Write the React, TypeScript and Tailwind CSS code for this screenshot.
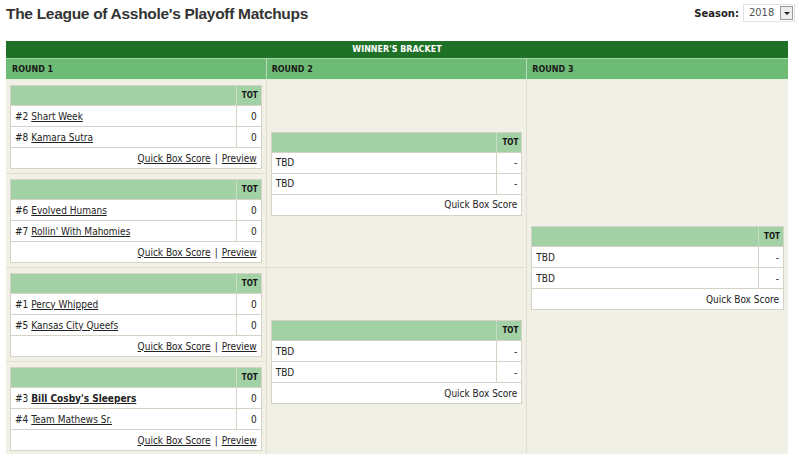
import React from "react";

type Team = { seed?: string; name: string; score: string; bold?: boolean; link?: boolean };

function Card({ teams, preview }: { teams: Team[]; preview: boolean }) {
  return (
    <div className="w-full border border-[#d6d3c6] bg-white">
      <div className="flex h-[20px] bg-[#a3d1a6] border-b border-[#d6d3c6]">
        <div className="flex-1" />
        <div className="w-[25px] border-l border-[#c5dfc6] flex items-center justify-end pr-[3px] pt-[1px] text-[8px] font-bold text-[#111]">
          TOT
        </div>
      </div>
      {teams.map((t, i) => (
        <div key={i} className="flex h-[21px] border-b border-[#d6d3c6] text-[10px] text-[#222]">
          <div className="flex-1 flex items-center pl-[4px] whitespace-nowrap">
            {t.seed && <span className="mr-[3px]">{t.seed}</span>}
            {t.link ? (
              <span className={"underline " + (t.bold ? "font-bold" : "")}>{t.name}</span>
            ) : (
              <span>{t.name}</span>
            )}
          </div>
          <div className="w-[25px] border-l border-[#d6d3c6] flex items-center justify-end pr-[4px]">{t.score}</div>
        </div>
      ))}
      <div className="flex h-[20px] items-center justify-end pr-[4px] text-[10px] text-[#222] whitespace-nowrap">
        <span className={preview ? "underline" : ""}>Quick Box Score</span>
        {preview && (
          <>
            <span className="mx-[4px]">|</span>
            <span className="underline">Preview</span>
          </>
        )}
      </div>
    </div>
  );
}

const r1: Team[][] = [
  [
    { seed: "#2", name: "Shart Week", score: "0", link: true },
    { seed: "#8", name: "Kamara Sutra", score: "0", link: true },
  ],
  [
    { seed: "#6", name: "Evolved Humans", score: "0", link: true },
    { seed: "#7", name: "Rollin' With Mahomies", score: "0", link: true },
  ],
  [
    { seed: "#1", name: "Percy Whipped", score: "0", link: true },
    { seed: "#5", name: "Kansas City Queefs", score: "0", link: true },
  ],
  [
    { seed: "#3", name: "Bill Cosby's Sleepers", score: "0", link: true, bold: true },
    { seed: "#4", name: "Team Mathews Sr.", score: "0", link: true },
  ],
];

const tbd: Team[] = [
  { name: "TBD", score: "-" },
  { name: "TBD", score: "-" },
];

const wide = { fontFamily: '"DejaVu Sans", Verdana, sans-serif' };

export default function App() {
  return (
    <div
      className="w-[800px] h-[454px] overflow-hidden bg-white relative"
      style={{ fontFamily: '"DejaVu Sans Condensed", "DejaVu Sans", Verdana, sans-serif' }}
    >
      <div className="flex items-start justify-between pl-[6px] pr-[5px] pt-[3px] h-[41px]">
        <h1
          className="text-[15.5px] font-bold text-[#333] leading-[22px] tracking-[-0.3px]"
          style={{ fontFamily: '"Liberation Sans", Arial, sans-serif' }}
        >
          The League of Asshole's Playoff Matchups
        </h1>
        <div className="flex items-center mt-[1px]">
          <span className="text-[10px] font-bold text-[#222] mr-[4px]" style={wide}>Season:</span>
          <div className="flex items-center h-[18px] w-[52px] border border-[#e2e2e2] bg-white">
            <span className="flex-1 text-[11px] text-[#555] pl-[5px]">2018</span>
            <div className="w-[13px] h-[14px] mr-[1px] border border-[#9a9a9a] bg-[#eee] flex items-center justify-center">
              <div className="w-0 h-0 border-l-[3px] border-r-[3px] border-t-[3px] border-l-transparent border-r-transparent border-t-[#222]" />
            </div>
          </div>
        </div>
      </div>

      <div className="ml-[6px] w-[782px]">
        <div
          className="h-[18px] bg-[#1f7128] flex items-center justify-center text-[8px] font-bold text-white border-b border-[#a9d6ab]"
          style={wide}
        >
          WINNER'S BRACKET
        </div>
        <div className="grid grid-cols-3 h-[21px] bg-[#6dbb74] border-b border-[#e6efe0]" style={wide}>
          <div className="flex items-center pl-[6px] pt-[2px] text-[8px] font-bold text-[#1a1a1a] border-r border-[#b8dcba]">ROUND 1</div>
          <div className="flex items-center pl-[5px] pt-[2px] text-[8px] font-bold text-[#1a1a1a] border-r border-[#b8dcba]">ROUND 2</div>
          <div className="flex items-center pl-[5px] pt-[2px] text-[8px] font-bold text-[#1a1a1a]">ROUND 3</div>
        </div>
        <div className="grid grid-cols-3 grid-rows-[94px_94px_94px_94px] bg-[#f1f0e7]">
          {r1.map((teams, i) => (
            <div
              key={i}
              className="col-start-1 px-[4px] pt-[5px] pb-[3px] border-b border-r border-[#e0ded3]"
              style={{ gridRow: `${i + 1}` }}
            >
              <Card teams={teams} preview />
            </div>
          ))}
          <div className="col-start-2 row-start-1 row-span-2 flex items-center px-[4px] border-b border-r border-[#e0ded3]">
            <Card teams={tbd} preview={false} />
          </div>
          <div className="col-start-2 row-start-3 row-span-2 flex items-center px-[4px] border-r border-[#e0ded3]">
            <Card teams={tbd} preview={false} />
          </div>
          <div className="col-start-3 row-start-1 row-span-4 flex items-center px-[4px]">
            <Card teams={tbd} preview={false} />
          </div>
        </div>
      </div>
    </div>
  );
}
